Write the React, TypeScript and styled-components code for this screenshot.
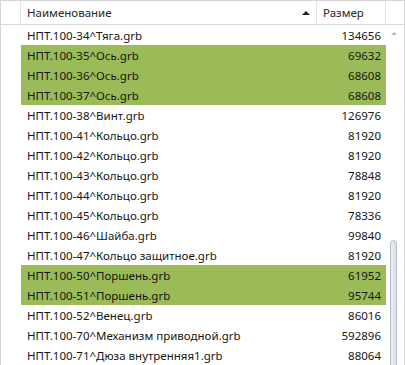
import React from 'react';
import styled, { createGlobalStyle } from 'styled-components';

const Global = createGlobalStyle`
    html, body { margin: 0; padding: 0; background: #fff; }
    * { box-sizing: border-box; }
`;

const Frame = styled.div`
    width: 405px;
    height: 365px;
    border: 1px solid #d4d4d4;
    border-bottom: none;
    overflow: hidden;
    font: 11.5px "Noto Sans", "Liberation Sans", sans-serif;
    color: #161616;
    background: #fff;
`;

const Header = styled.div`
    display: grid;
    grid-template-columns: 20px 296px 69px 18px;
    height: 24px;
    border-bottom: 1px solid #d9d9d9;
`;

const HeadCell = styled.div<{ $last?: boolean }>`
    display: flex;
    align-items: center;
    padding-left: 6px;
    border-right: ${p => (p.$last ? 'none' : '1px solid #e3e3e3')};
    color: #262626;
`;

const HeadTitle = styled.span`
    flex: 1;
`;

const SortArrow = styled.span`
    width: 0;
    height: 0;
    border-left: 4px solid transparent;
    border-right: 4px solid transparent;
    border-bottom: 4px solid #222;
    margin-right: 6px;
`;

const Body = styled.div`
    display: grid;
    grid-template-columns: 20px 365px 18px;
`;

const Gutter = styled.div``;

const List = styled.div`
    display: flex;
    flex-direction: column;
`;

const Row = styled.div<{ $marked?: boolean }>`
    display: grid;
    grid-template-columns: 296px 69px;
    height: 20px;
    align-items: center;
    background: ${p => (p.$marked ? '#9bbb59' : 'transparent')};
`;

const Name = styled.div`
    padding-left: 6px;
    white-space: nowrap;
    overflow: hidden;
`;

const Size = styled.div`
    text-align: right;
    padding-right: 5px;
`;

const Scroll = styled.div`
    position: relative;
    height: 340px;
`;

const UpArrow = styled.span`
    position: absolute;
    left: 5px;
    top: 7px;
    width: 0;
    height: 0;
    border-left: 3px solid transparent;
    border-right: 3px solid transparent;
    border-bottom: 3px solid #b8b8b8;
`;

const Thumb = styled.div`
    position: absolute;
    left: 4px;
    top: 215px;
    width: 7px;
    height: 140px;
    border: 1px solid #b7bcc6;
    border-radius: 4px;
    background: linear-gradient(to right, #e9ecf2, #d9dde6);
`;

const rows: [string, number, boolean][] = [
    ['НПТ.100-34^Тяга.grb', 134656, false],
    ['НПТ.100-35^Ось.grb', 69632, true],
    ['НПТ.100-36^Ось.grb', 68608, true],
    ['НПТ.100-37^Ось.grb', 68608, true],
    ['НПТ.100-38^Винт.grb', 126976, false],
    ['НПТ.100-41^Кольцо.grb', 81920, false],
    ['НПТ.100-42^Кольцо.grb', 81920, false],
    ['НПТ.100-43^Кольцо.grb', 78848, false],
    ['НПТ.100-44^Кольцо.grb', 81920, false],
    ['НПТ.100-45^Кольцо.grb', 78336, false],
    ['НПТ.100-46^Шайба.grb', 99840, false],
    ['НПТ.100-47^Кольцо защитное.grb', 81920, false],
    ['НПТ.100-50^Поршень.grb', 61952, true],
    ['НПТ.100-51^Поршень.grb', 95744, true],
    ['НПТ.100-52^Венец.grb', 86016, false],
    ['НПТ.100-70^Механизм приводной.grb', 592896, false],
    ['НПТ.100-71^Дюза внутренняя1.grb', 88064, false],
];

const App = () => {
    return (
        <>
            <Global />
            <Frame>
                <Header>
                    <HeadCell />
                    <HeadCell>
                        <HeadTitle>Наименование</HeadTitle>
                        <SortArrow />
                    </HeadCell>
                    <HeadCell>Размер</HeadCell>
                    <HeadCell $last />
                </Header>
                <Body>
                    <Gutter />
                    <List>
                        {rows.map(([name, size, marked]) => (
                            <Row key={name} $marked={marked}>
                                <Name>{name}</Name>
                                <Size>{size}</Size>
                            </Row>
                        ))}
                    </List>
                    <Scroll>
                        <UpArrow />
                        <Thumb />
                    </Scroll>
                </Body>
            </Frame>
        </>
    );
};

export default App;
